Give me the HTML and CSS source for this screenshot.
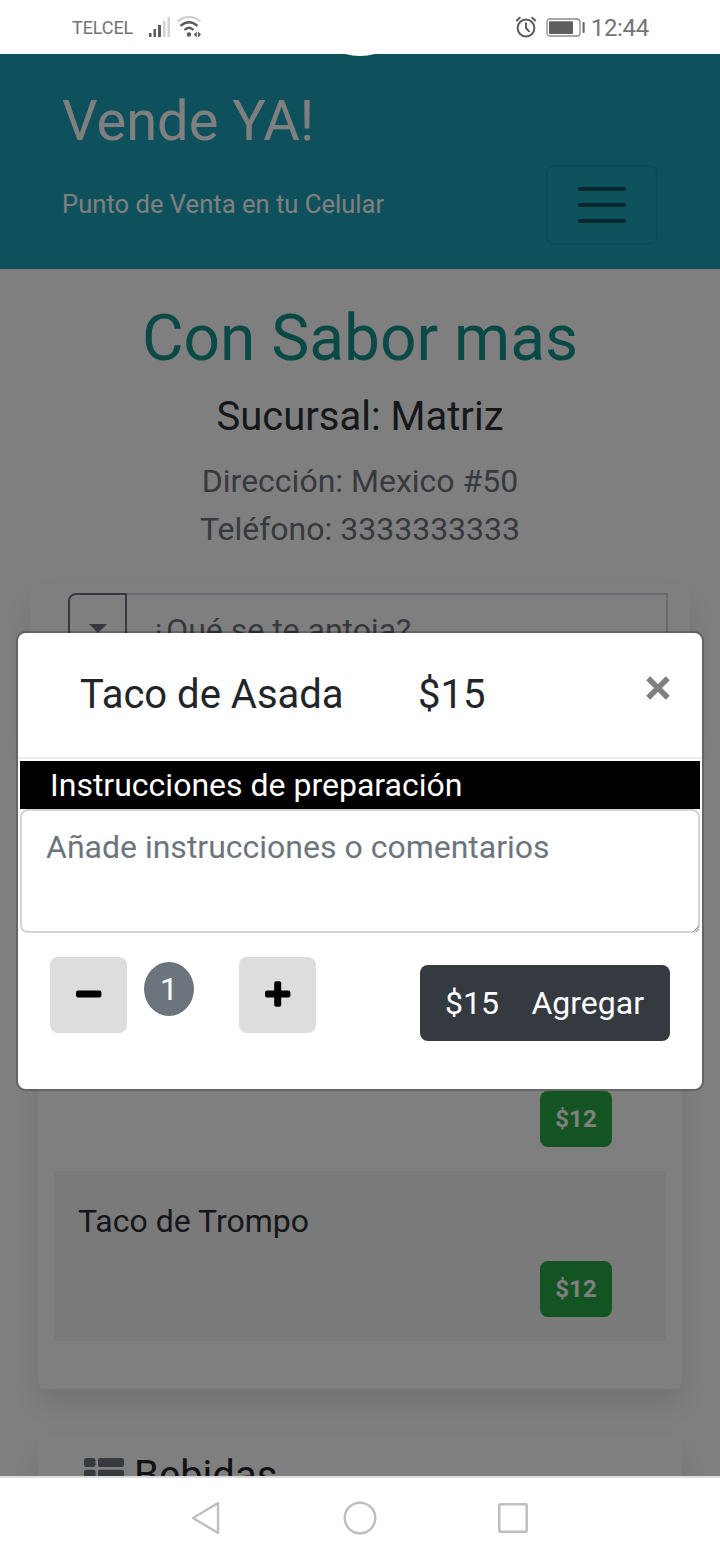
FILE: index.html
```html
<!DOCTYPE html>
<html lang="es">
<head>
<meta charset="utf-8">
<title>Vende YA!</title>
<link rel="stylesheet" href="styles.css">
</head>
<body>
<div class="status">
  <span class="carrier">TELCEL</span>
  <svg class="signal" width="24" height="22" viewBox="0 0 24 22"><path fill="#5b5b5b" d="M1 17h2.500v4H1zM5.500 13h2.500v8H5.500zM10 9h3v12h-3z"/><path fill="#d2d2d2" d="M15 5h2.500v16H15zM19.500 1h2.500v20h-2.500z"/></svg>
  <svg class="wifi" width="26" height="22" viewBox="0 0 26 22" fill="none"><path d="M1.500 5.500Q13-3.500 24.500 5.500" stroke="#d2d2d2" stroke-width="2.400"/><path d="M4.500 9.800Q13 2.500 21.500 9.800M8.500 14Q13 9.500 17.500 14" stroke="#5b5b5b" stroke-width="2.400"/><circle cx="13" cy="18.500" r="2.200" fill="#5b5b5b"/><path d="M20.800 15.500v6l-3-3zM22 15.500v6l3-3z" fill="#5b5b5b"/></svg>
  <svg class="alarm" width="22" height="22" viewBox="0 0 22 22" fill="none" stroke="#5b5b5b" stroke-width="2" stroke-linecap="round"><circle cx="11" cy="12" r="8.400"/><path d="M11 7.300V12l3 3.300M1.800 4.500l3-2.800M20.200 4.500l-3-2.800"/></svg>
  <svg class="battery" width="40" height="20" viewBox="0 0 40 20"><rect x="1" y="1" width="33" height="17" rx="3" fill="none" stroke="#8a8a8a" stroke-width="1.300"/><rect x="3" y="3.300" width="24" height="12.600" rx="1" fill="#5f5f5f"/><rect x="36.500" y="4" width="2.200" height="11" rx="1" fill="#6a6a6a"/></svg>
  <span class="clock">12:44</span>
</div>

<main class="app">
  <svg class="speaker" width="40" height="3" viewBox="0 0 40 3"><path d="M5 0Q20 4 35 0z" fill="#fff"/></svg>
  <header class="navbar">
    <h1 class="brand">Vende YA!</h1>
    <div class="nav-row">
      <span class="tagline">Punto de Venta en tu Celular</span>
      <button class="toggler" aria-label="Menú"><svg width="60" height="60" viewBox="0 0 30 30"><path stroke="rgba(0,0,0,.5)" stroke-width="2" stroke-linecap="round" d="M4 7h22M4 15h22M4 23h22"/></svg></button>
    </div>
  </header>

  <section class="shop">
    <h2 class="shop-name">Con Sabor mas</h2>
    <h4 class="branch">Sucursal: Matriz</h4>
    <p class="contact">Dirección: Mexico #50<br>Teléfono: 3333333333</p>
  </section>

  <div class="search-card">
    <div class="caret-box"><span class="caret"></span></div>
    <div class="search-box">¿Qué se te antoja?</div>
  </div>

  <section class="menu-card">
    <div class="item"><span class="price">$12</span></div>
    <div class="item item-alt"><span class="item-name">Taco de Trompo</span><span class="price">$12</span></div>
  </section>

  <section class="drinks-card">
    <svg width="40" height="35" viewBox="0 0 40 35" fill="#6c757d"><rect width="11.500" height="9" rx="2"/><rect x="14" width="26" height="9" rx="2"/><rect y="11.700" width="11.500" height="9.500" rx="2"/><rect x="14" y="11.700" width="26" height="9.500" rx="2"/><rect y="24" width="11.500" height="9" rx="2"/><rect x="14" y="24" width="26" height="9" rx="2"/></svg>
    <h4 class="drinks-title">Bebidas</h4>
  </section>

  <div class="backdrop"></div>

  <div class="modal">
    <div class="modal-header">
      <span class="product">Taco de Asada</span>
      <span class="product-price">$15</span>
      <svg class="close" width="26" height="26" viewBox="0 0 26 26"><path d="M3.200 3.200l19.600 19.600M22.800 3.200l-19.600 19.600" stroke="#7f7f7f" stroke-width="5.600"/></svg>
    </div>
    <div class="modal-body">
      <div class="label">Instrucciones de preparación</div>
      <div class="note-wrap">
        <textarea class="note" placeholder="Añade instrucciones o comentarios"></textarea>
        <svg class="grip" width="6" height="6" viewBox="0 0 6 6"><path d="M0 6l6-6M3 6l3-3" stroke="#777" stroke-width=".8"/></svg>
      </div>
      <div class="actions">
        <button class="step" aria-label="Menos"><svg width="26" height="26" viewBox="0 0 26 26"><rect y="9.500" width="25.400" height="7" rx="2"/></svg></button>
        <span class="qty">1</span>
        <button class="step step-plus" aria-label="Más"><svg width="26" height="26" viewBox="0 0 26 26"><rect y="9.500" width="25.400" height="7" rx="2"/><rect x="9.200" y=".300" width="7" height="25.400" rx="2"/></svg></button>
        <button class="add"><span>$15</span><span>Agregar</span></button>
      </div>
    </div>
  </div>
</main>

<nav class="system-nav">
  <svg width="32" height="36" viewBox="0 0 32 36"><path d="M3 18L28 3v30z" fill="none" stroke="#bfbfbf" stroke-width="2.400" stroke-linejoin="round"/></svg>
  <svg width="36" height="36" viewBox="0 0 36 36"><circle cx="18" cy="18" r="15.300" fill="none" stroke="#bfbfbf" stroke-width="2.400"/></svg>
  <svg width="32" height="36" viewBox="0 0 32 36"><rect x=".500" y="4.300" width="27.400" height="27.400" rx="1" fill="none" stroke="#bfbfbf" stroke-width="2.500" transform="translate(.8 0)"/></svg>
</nav>
</body>
</html>
```

FILE: styles.css
```css
* { box-sizing: border-box; }

body {
  margin: 0;
  width: 720px;
  height: 1560px;
  overflow: hidden;
  display: flex;
  flex-direction: column;
  background: #fff;
  color: #212529;
  font: 32px/48px Roboto, "Liberation Sans", sans-serif;
}

h1, h2, h4, p { margin: 0; font-weight: 400; }
button { font: inherit; border: 0; padding: 0; }
svg { display: block; flex: none; }

/* Status bar */
.status {
  flex: none;
  height: 54px;
  padding: 1px 71px 0 72px;
  display: flex;
  align-items: center;
  color: #747474;
}
.carrier { font-size: 18px; letter-spacing: -0.1px; }
.signal { margin: -2px 0 0 15px; }
.wifi { margin: -2px 0 0 4px; }
.alarm { margin: -2px 9px 0 auto; }
.battery { margin-right: 5px; }
.clock { font-size: 24px; letter-spacing: -0.3px; }

.app {
  position: relative;
  flex: none;
  height: 1422px;
  overflow: hidden;
}
.speaker { position: absolute; top: 0; left: 340px; z-index: 5; }

/* Header */
.navbar {
  height: 215px;
  padding: 33px 62px 0;
  background: #1ca1b7;
  color: #fff;
}
.brand { font-size: 56px; line-height: 68px; }
.nav-row {
  display: flex;
  justify-content: space-between;
  align-items: center;
  margin-top: 10px;
}
.tagline { font-size: 25.6px; margin-top: -2px; }
.toggler {
  width: 112px;
  height: 80px;
  display: flex;
  align-items: center;
  justify-content: center;
  background: transparent;
  border: 2px solid rgba(0, 0, 0, .07);
  border-radius: 8px;
}

/* Shop info */
.shop { padding-top: 31px; text-align: center; }
.shop-name { font-size: 64px; line-height: 77px; color: #14928a; }
.branch { font-size: 40px; line-height: 48px; margin-top: 16px; color: #2b3035; }
.contact { margin-top: 16px; color: #6c757d; }

/* Search */
.search-card {
  height: 160px;
  margin: 32px 30px 0;
  padding: 8px 22px 0 38px;
  display: flex;
  background: #fff;
  border-radius: 8px;
  box-shadow: 0 16px 32px rgba(0, 0, 0, .11);
}
.caret-box {
  width: 59px;
  height: 76px;
  display: flex;
  align-items: center;
  justify-content: center;
  border: 2px solid #6c757d;
  border-radius: 8px 0 0 8px;
}
.caret {
  margin-top: -5px;
  border: 9.6px solid transparent;
  border-top-color: #6c757d;
  border-bottom: 0;
}
.search-box {
  flex: 1;
  height: 76px;
  padding: 11px 24px;
  border: 2px solid #ced4da;
  border-left: 0;
  color: #6c757d;
}

/* Menu lists */
.menu-card {
  height: 596px;
  margin: 48px 38px 0;
  padding: 208px 16px 0;
  background: #fff;
  border-radius: 8px;
  box-shadow: 0 16px 32px rgba(0, 0, 0, .11);
}
.item {
  height: 170px;
  padding: 26px 54px 24px 24px;
  display: flex;
  flex-direction: column;
  color: #2b3035;
}
.item-alt { background: #f4f4f4; }
.price {
  width: 72px;
  height: 56px;
  margin: auto 0 0 auto;
  border-radius: 8px;
  background: #28a745;
  color: #fff;
  font-size: 24px;
  font-weight: 700;
  line-height: 56px;
  text-align: center;
}
.drinks-card {
  height: 120px;
  margin: 48px 38px 0;
  padding: 15px 46px;
  display: flex;
  align-items: flex-start;
  gap: 10px;
  background: #fff;
  border-radius: 8px;
  box-shadow: 0 16px 32px rgba(0, 0, 0, .11);
}
.drinks-card svg { margin-top: 6px; }
.drinks-title { font-size: 40px; }

/* Dialog */
.backdrop { position: absolute; inset: 0; background: rgba(0, 0, 0, .5); }
.modal {
  position: absolute;
  left: 16px;
  top: 577px;
  width: 688px;
  height: 460px;
  background: #fff;
  background-clip: padding-box;
  border: 2px solid rgba(0, 0, 0, .2);
  border-radius: 9.6px;
}
.modal-header {
  height: 126px;
  padding: 38px 31px 0 62px;
  display: flex;
  align-items: flex-start;
  border-bottom: 2px solid #e9ecef;
  font-size: 40px;
}
.product { width: 338px; }
.close { margin: 4px 0 0 auto; }
.modal-body { padding: 2px; }
.label { height: 48px; padding-left: 30px; background: #000; color: #fff; }
.note-wrap { position: relative; height: 124px; }
.note {
  display: block;
  width: 100%;
  height: 124px;
  padding: 12px 24px;
  border: 2px solid #ced4da;
  border-radius: 8px;
  font: inherit;
  resize: none;
  outline: 0;
}
.note::placeholder { color: #6c757d; opacity: 1; }
.grip { position: absolute; right: 1px; bottom: 1px; }
.actions { display: flex; align-items: flex-start; padding: 24px 30px 0; }
.step {
  width: 77px;
  height: 76px;
  padding-bottom: 3px;
  display: flex;
  align-items: center;
  justify-content: center;
  background: #ddd;
  border-radius: 8px;
}
.qty {
  width: 50px;
  height: 54px;
  margin: 5px 45px 0 17px;
  border-radius: 50%;
  background: #6c757d;
  color: #fff;
  line-height: 54px;
  text-align: center;
}
.add {
  width: 250px;
  height: 76px;
  margin: 8px 0 0 auto;
  padding: 0 26px 0 25px;
  display: flex;
  align-items: center;
  justify-content: space-between;
  background: #343a40;
  color: #fff;
  border-radius: 8px;
}

/* System buttons */
.system-nav {
  flex: none;
  height: 84px;
  padding: 0 190px 2px;
  display: flex;
  align-items: center;
  justify-content: space-between;
  background: #fff;
  border-top: 2px solid #dedcde;
}
```
